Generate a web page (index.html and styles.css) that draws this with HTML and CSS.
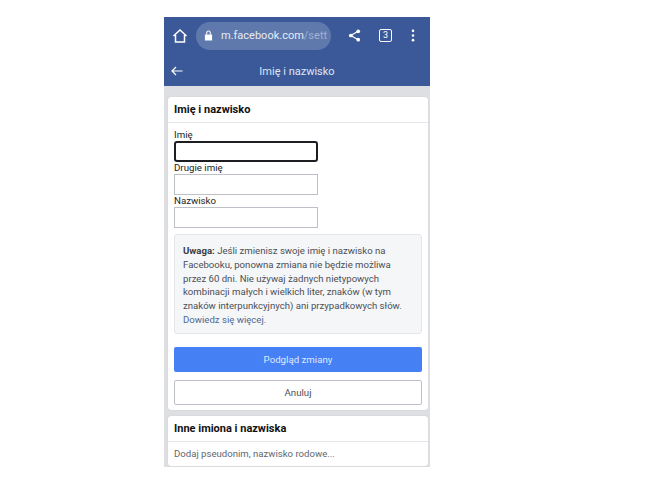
FILE: index.html
```html
<!DOCTYPE html>
<html lang="pl">
	<head>
		<title>Imię i nazwisko</title>
		<meta http-equiv="Content-Type" content="text/html; charset=utf-8">
		<link rel="stylesheet" href="styles.css">
	</head>
	<body>
		<div class="phone">
			<div class="browser">
				<svg class="icon home" viewBox="0 0 16 16"><path d="M1.500 8 8 2l6.500 6M3.500 7v7h9V7" fill="none" stroke="#fff" stroke-width="1.500"/></svg>
				<div class="url">
					<svg class="lock" viewBox="0 0 10 12"><path d="M1 5h8v6.500H1z" fill="#fff"/><path d="M3 5V3a2 2 0 0 1 4 0v2" fill="none" stroke="#fff" stroke-width="1.200"/></svg>
					<span class="host">m.facebook.com</span><span class="path">/sett</span>
				</div>
				<svg class="icon share" viewBox="0 0 14 14"><path d="M11 2.500 3 7l8 4.500" fill="none" stroke="#fff" stroke-width="1.300"/><circle cx="11" cy="2.500" r="2" fill="#fff"/><circle cx="3" cy="7" r="2" fill="#fff"/><circle cx="11" cy="11.500" r="2" fill="#fff"/></svg>
				<div class="tabs">3</div>
				<svg class="icon more" viewBox="0 0 4 14"><circle cx="2" cy="2" r="1.400" fill="#fff"/><circle cx="2" cy="7" r="1.400" fill="#fff"/><circle cx="2" cy="12" r="1.400" fill="#fff"/></svg>
			</div>
			<div class="titlebar">
				<svg class="back" viewBox="0 0 12 10"><path d="M11.500 5H1M5 1 1 5l4 4" fill="none" stroke="#fff" stroke-width="1.200"/></svg>
				<span>Imię i nazwisko</span>
			</div>
			<div class="content">
				<div class="card">
					<h2>Imię i nazwisko</h2>
					<form class="form">
						<label for="first">Imię</label>
						<input type="text" id="first" class="focused">
						<label for="middle">Drugie imię</label>
						<input type="text" id="middle">
						<label for="last">Nazwisko</label>
						<input type="text" id="last">
						<div class="note">
							<b>Uwaga:</b> Jeśli zmienisz swoje imię i nazwisko na Facebooku, ponowna zmiana nie będzie możliwa przez 60 dni. Nie używaj żadnych nietypowych kombinacji małych i wielkich liter, znaków (w tym znaków interpunkcyjnych) ani przypadkowych słów. <a href="#">Dowiedz się więcej.</a>
						</div>
						<button type="button" class="button primary">Podgląd zmiany</button>
						<button type="button" class="button">Anuluj</button>
					</form>
				</div>
				<div class="card other">
					<h2>Inne imiona i nazwiska</h2>
					<p>Dodaj pseudonim, nazwisko rodowe...</p>
				</div>
			</div>
		</div>
	</body>
</html>
```

FILE: styles.css
```css
body {
	font-family: Roboto, 'Liberation Sans', Arial, sans-serif;
	margin: 0;
	background-color: #fff;
	color: #1c1e21;
}
.phone {
	width: 266px;
	margin: 17px 0 0 164px;
}
.browser {
	height: 37px;
	display: flex;
	align-items: center;
	background-color: #3b5998;
	padding-left: 8px;
}
.icon {
	display: block;
	flex: none;
}
.home {
	width: 16px;
	height: 16px;
}
.url {
	width: 135px;
	height: 28px;
	margin-left: 8px;
	padding-left: 8px;
	box-sizing: border-box;
	display: flex;
	align-items: center;
	background-color: #6079ac;
	border-radius: 14px;
	font-size: 11px;
	color: #e6ebf5;
	overflow: hidden;
	white-space: nowrap;
}
.lock {
	width: 9px;
	height: 11px;
	margin-right: 8px;
	flex: none;
}
.path {
	color: #a3b2d0;
}
.share {
	width: 13px;
	height: 13px;
	margin-left: 17px;
}
.tabs {
	width: 11px;
	height: 11px;
	margin-left: 18px;
	border: 1px solid #fff;
	border-radius: 2px;
	font-size: 9px;
	line-height: 11px;
	text-align: center;
	color: #fff;
}
.more {
	width: 4px;
	height: 13px;
	margin-left: 19px;
}
.titlebar {
	height: 30px;
	padding-top: 2px;
	position: relative;
	display: flex;
	align-items: center;
	justify-content: center;
	background-color: #3b5998;
	font-size: 11px;
	color: #dfe6f5;
}
.back {
	position: absolute;
	left: 7px;
	top: 12px;
	width: 12px;
	height: 10px;
}
.content {
	background-color: #dddfe2;
	padding: 11px 2px 1px 4px;
}
.card {
	background-color: #fff;
	border-radius: 3px;
	box-shadow: 0 0 1px #b5b8bd;
}
.card h2 {
	margin: 0;
	height: 25px;
	line-height: 26px;
	padding-left: 6px;
	font-size: 11px;
	font-weight: 700;
	color: #111;
	border-bottom: 1px solid #e5e6e9;
}
.form {
	padding: 5px 6px 5px;
	display: flex;
	flex-direction: column;
	align-items: flex-start;
}
.form label {
	font-size: 9.700px;
	line-height: 13px;
	height: 13px;
	color: #1c1e21;
}
.form input {
	display: block;
	width: 144px;
	height: 21px;
	box-sizing: border-box;
	border: 1px solid #bdc1c7;
	padding: 0;
	margin-bottom: -1px;
	background-color: #fff;
}
.form input.focused {
	border: 2px solid #1c1e21;
	border-radius: 3px;
}
.note {
	width: 248px;
	height: 100px;
	box-sizing: border-box;
	margin-top: 7px;
	padding: 9px 8px;
	background-color: #f5f6f7;
	border: 1px solid #e5e6e9;
	border-radius: 3px;
	font-size: 9.600px;
	line-height: 13.800px;
	color: #4b4f56;
}
.note b {
	color: #3a3d42;
}
.note a {
	color: #4f6694;
	text-decoration: none;
}
.button {
	display: block;
	width: 248px;
	height: 25px;
	box-sizing: border-box;
	margin-top: 8px;
	padding: 0;
	border: 1px solid #bdc1c7;
	border-radius: 2px;
	background-color: #fff;
	font-family: inherit;
	font-size: 9.700px;
	color: #4b4f56;
}
.primary {
	margin-top: 13px;
	border: none;
	background-color: #4680f5;
	color: #dfeafe;
}
.other {
	margin-top: 6px;
}
.other p {
	margin: 0;
	height: 24px;
	line-height: 24px;
	padding-left: 6px;
	font-size: 9.600px;
	color: #606770;
}
```
